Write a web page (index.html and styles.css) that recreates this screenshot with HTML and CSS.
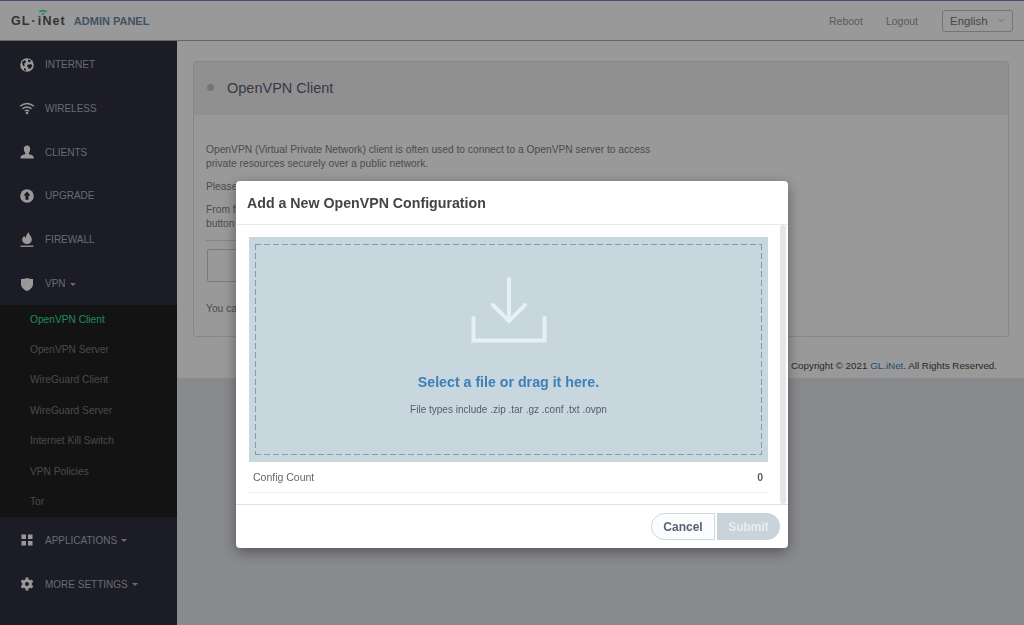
FILE: index.html
```html
<!DOCTYPE html>
<html lang="en">
<head>
    <meta charset="UTF-8">
    <meta name="viewport" content="width=device-width, initial-scale=1.0">
    <title>GL.iNet Admin Panel</title>
    <link rel="stylesheet" href="styles.css">
</head>
<body>

<div class="topbar">
    <div class="logo">
        <svg class="logo-wifi" width="10" height="7" viewBox="0 0 10 7"><path d="M0.5 2.2Q5 -0.6 9.5 2.2L8.2 3.6Q5 1.8 1.8 3.6Z" fill="#4fe0a8"/><path d="M3 4.6Q5 3.4 7 4.6L5 6.6Z" fill="#4fe0a8"/></svg>
        GL<span class="logo-dot">·</span>iNet
    </div>
    <div class="panel-name">ADMIN PANEL</div>
    <div class="top-links">
        <a>Reboot</a>
        <a>Logout</a>
        <div class="lang">English
            <svg width="7" height="5" viewBox="0 0 7 5"><path d="M1 1l2.5 2.5L6 1" fill="none" stroke="#bbb" stroke-width="1"/></svg>
        </div>
    </div>
</div>

<div class="layout">
    <div class="sidebar">
        <div class="menu-item">
            <svg class="menu-icon" viewBox="0 0 16 16"><circle cx="8" cy="8" r="6.8" fill="#fff"/><path d="M3 5l3-2 1 2-2 2 1 2-2 0zM9 2.5l3 1-1 2-2-1zM8 8l4-1 1.5 2-2.5 3-2-1zM5 11l2 1 0 2-2-1z" fill="#2d2f3f"/></svg>
            INTERNET
        </div>
        <div class="menu-item">
            <svg class="menu-icon" viewBox="0 0 16 16"><path d="M1 6.2Q8 0.8 15 6.2M3.4 8.8Q8 5.2 12.6 8.8M5.8 11Q8 9.6 10.2 11" fill="none" stroke="#fff" stroke-width="1.4"/><circle cx="8" cy="13" r="1.3" fill="#fff"/></svg>
            WIRELESS
        </div>
        <div class="menu-item">
            <svg class="menu-icon" viewBox="0 0 16 16"><path d="M8 1.5c2 0 3.2 1.5 3.2 3.5S10 9 9.6 9.4c0 1 3.9 1.4 5 3V14.5H1.600V12.400c1.100-1.600 5-2 5-3C6.200 9 4.800 7 4.800 5S6 1.500 8 1.500z" fill="#fff"/></svg>
            CLIENTS
        </div>
        <div class="menu-item">
            <svg class="menu-icon" viewBox="0 0 16 16"><circle cx="8" cy="8" r="6.800" fill="#fff"/><path d="M8 3.600L11.600 7.600H9.600V11.800H6.400V7.600H4.400z" fill="#2d2f3f"/></svg>
            UPGRADE
        </div>
        <div class="menu-item">
            <svg class="menu-icon" viewBox="0 0 16 16"><path d="M9.500 0c.4 3 3.300 4.200 3.300 7.600 0 2.600-2 4.500-4.800 4.500s-4.800-2-4.800-4.300c0-2 1.200-3 2-4 .3 1.100.8 1.700 1.500 2C7 3.500 8.300 1.700 9.500 0z" fill="#fff"/><path d="M1.500 14.200H14.500" stroke="#fff" stroke-width="1.300"/></svg>
            FIREWALL
        </div>
        <div class="menu-item">
            <svg class="menu-icon" viewBox="0 0 16 16"><path d="M2 3Q5 3.200 8 2Q11 3.200 14 3V8C14 11.500 11 13.800 8 15C5 13.800 2 11.500 2 8z" fill="#fff"/></svg>
            VPN <span class="caret"></span>
        </div>
        <div class="submenu">
            <div class="sub-item active">OpenVPN Client</div>
            <div class="sub-item">OpenVPN Server</div>
            <div class="sub-item">WireGuard Client</div>
            <div class="sub-item">WireGuard Server</div>
            <div class="sub-item">Internet Kill Switch</div>
            <div class="sub-item">VPN Policies</div>
            <div class="sub-item">Tor</div>
        </div>
        <div class="menu-item">
            <svg class="menu-icon" viewBox="0 0 16 16"><path d="M2.500 2.500H7V7H2.500zM9 2.500H13.500V7H9zM2.500 9H7V13.500H2.500zM9 9H13.500V13.500H9z" fill="#fff"/></svg>
            APPLICATIONS <span class="caret"></span>
        </div>
        <div class="menu-item">
            <svg class="menu-icon" viewBox="0 0 16 16"><path d="M8 1.500V14.500M2.400 4.800L13.600 11.200M13.600 4.800L2.400 11.200" stroke="#fff" stroke-width="2.800"/><circle cx="8" cy="8" r="4.800" fill="#fff"/><circle cx="8" cy="8" r="2" fill="#2d2f3f"/></svg>
            MORE SETTINGS <span class="caret"></span>
        </div>
    </div>

    <div class="main">
        <div class="content">
            <div class="panel">
                <div class="panel-head">
                    <span class="panel-dot"></span>
                    <h1>OpenVPN Client</h1>
                </div>
                <div class="panel-body">
                    <p>OpenVPN (Virtual Private Network) client is often used to connect to a OpenVPN server to access<br>private resources securely over a public network.</p>
                    <p>Please</p>
                    <p>From f<br>button</p>
                    <div class="panel-rule"></div>
                    <div class="config-box"></div>
                    <p>You ca</p>
                </div>
            </div>
            <div class="copyright">Copyright © 2021 <a>GL.iNet</a>. All Rights Reserved.</div>
        </div>
    </div>
</div>

<div class="backdrop">
    <div class="modal">
        <div class="modal-head">Add a New OpenVPN Configuration</div>
        <div class="modal-body">
            <div class="modal-scroll">
                <div class="dropzone">
                    <div class="dropzone-inner">
                        <svg class="drop-icon" width="76" height="66" viewBox="0 0 76 66"><path d="M38 2V43M22 28L38 44L54 28M2.500 41V63.500H73.500V41" fill="none" stroke="#e6f1f3" stroke-width="4" stroke-linecap="round"/></svg>
                        <div class="drop-title">Select a file or drag it here.</div>
                        <div class="drop-types">File types include .zip .tar .gz .conf .txt .ovpn</div>
                    </div>
                </div>
                <div class="config-row">
                    <span>Config Count</span>
                    <b>0</b>
                </div>
            </div>
            <div class="scrollbar"></div>
        </div>
        <div class="modal-foot">
            <button class="btn-cancel">Cancel</button>
            <button class="btn-submit">Submit</button>
        </div>
    </div>
</div>

</body>
</html>
```

FILE: styles.css
```css
html, body {
    height: 100%;
}
body {
    margin: 0;
    background: #e4e6ed;
    font-family: "Liberation Sans", Arial, sans-serif;
    overflow: hidden;
}
.topbar {
    height: 39px;
    display: flex;
    align-items: center;
    background: #fff;
    border-top: 1px solid #847cc8;
    border-bottom: 1px solid #a8a8a8;
    padding-left: 11px;
}
.logo {
    position: relative;
    font-size: 12.5px;
    font-weight: bold;
    letter-spacing: 1.1px;
    color: #555;
    margin-right: 8px;
}
.logo-dot {
    margin: 0 1px;
}
.logo-wifi {
    position: absolute;
    left: 27px;
    top: -5px;
}
.panel-name {
    font-size: 11px;
    font-weight: bold;
    color: #6c8aa6;
}
.top-links {
    margin-left: auto;
    display: flex;
    align-items: center;
    font-size: 10.500px;
    color: #999;
}
.top-links a {
    margin-right: 23px;
}
.lang {
    width: 71px;
    height: 22px;
    box-sizing: border-box;
    margin-right: 11px;
    margin-left: 1px;
    border: 1px solid #c4c4c4;
    border-radius: 3px;
    padding: 0 7px;
    font-size: 11.500px;
    color: #777;
    display: flex;
    align-items: center;
    justify-content: space-between;
}
.layout {
    display: flex;
    height: 585px;
}
.sidebar {
    width: 177px;
    flex-shrink: 0;
    padding-top: 1.700px;
    background: #2d2f3f;
}
.menu-item {
    height: 43.800px;
    display: flex;
    align-items: center;
    padding-left: 19px;
    font-size: 10px;
    color: #b0b1bc;
    box-sizing: border-box;
}
.menu-icon {
    width: 16px;
    height: 16px;
    margin-right: 10px;
}
.caret {
    width: 0;
    height: 0;
    margin-left: 4px;
    margin-top: 1px;
    border-left: 3px solid transparent;
    border-right: 3px solid transparent;
    border-top: 3px solid #b0b1bc;
}
.submenu {
    background: #202020;
    margin: -0.800px 0 1.100px;
}
.sub-item {
    height: 30.400px;
    line-height: 30.400px;
    padding-left: 30px;
    font-size: 10.200px;
    color: #7c7c7c;
}
.sub-item.active {
    color: #34e09c;
}
.main {
    flex: 1;
}
.content {
    height: 317px;
    padding: 20px 15px 0 16px;
    background: #fff;
}
.panel {
    height: 274px;
    border: 1px solid #e2e2e2;
    border-radius: 3px;
}
.panel-head {
    height: 53px;
    display: flex;
    align-items: center;
    padding: 0 0 2px 13px;
    box-sizing: border-box;
    background: #f0f0f0;
}
.panel-dot {
    width: 7px;
    height: 7px;
    border-radius: 50%;
    background: #c4c4c4;
    margin-right: 13px;
}
.panel-head h1 {
    margin: 0;
    font-size: 14.500px;
    font-weight: normal;
    color: #5c6076;
}
.panel-body {
    padding: 28px 12px 0;
    font-size: 10.250px;
    line-height: 14px;
    color: #808080;
}
.panel-body p {
    margin: 0 0 9px;
}
.panel-rule {
    width: 440px;
    height: 1px;
    margin-top: 8px;
    background: #dcdcdc;
}
.config-box {
    width: 440px;
    height: 31px;
    margin: 8px 0 20px 1px;
    border: 1px solid #ccc;
    border-radius: 2px;
}
.copyright {
    margin-top: 23px;
    padding-right: 12px;
    text-align: right;
    font-size: 9.800px;
    color: #444;
}
.copyright a {
    color: #3d7fb8;
}
.backdrop {
    position: fixed;
    top: 0;
    left: 0;
    width: 100%;
    height: 100%;
    background: rgba(0, 0, 0, 0.4);
}
.modal {
    width: 552px;
    margin: 181px auto 0;
    background: #fff;
    border-radius: 4px;
    box-shadow: 0 4px 14px rgba(0, 0, 0, 0.4);
}
.modal-head {
    height: 43px;
    display: flex;
    align-items: center;
    padding-left: 11px;
    border-bottom: 1px solid #e8e8e8;
    font-size: 14.200px;
    font-weight: bold;
    color: #444;
}
.modal-body {
    height: 279px;
    display: flex;
    border-bottom: 1px solid #e0e0e0;
    overflow: hidden;
}
.modal-scroll {
    width: 519px;
    margin: 12px 13px 0;
}
.scrollbar {
    width: 6px;
    margin-left: -1px;
    background: #e6e6e6;
    border-radius: 3px;
}
.dropzone {
    height: 225px;
    box-sizing: border-box;
    padding: 7px 6px;
    background: #c8d7de;
}
/* dashes are longer than a plain dashed border gives */
.dropzone-inner {
    height: 100%;
    box-sizing: border-box;
    padding-top: 33px;
    display: flex;
    flex-direction: column;
    align-items: center;
    background:
        linear-gradient(to right, #7d9fa9 70%, transparent 0) top left / 9px 1px repeat-x,
        linear-gradient(to right, #7d9fa9 70%, transparent 0) bottom left / 9px 1px repeat-x,
        linear-gradient(to bottom, #7d9fa9 70%, transparent 0) top left / 1px 9px repeat-y,
        linear-gradient(to bottom, #7d9fa9 70%, transparent 0) top right / 1px 9px repeat-y;
}
.drop-icon {
    display: block;
}
.drop-title {
    margin-top: 31px;
    font-size: 14.200px;
    font-weight: bold;
    color: #3d7fb8;
}
.drop-types {
    margin-top: 14px;
    font-size: 10px;
    color: #555c6c;
}
.config-row {
    height: 30px;
    display: flex;
    align-items: center;
    justify-content: space-between;
    padding: 0 5px 0 4px;
    border-bottom: 1px solid #eee;
    font-size: 10.500px;
    color: #666;
}
.config-row b {
    color: #555c6c;
}
.modal-foot {
    height: 43px;
    display: flex;
    justify-content: flex-end;
    align-items: center;
    padding-right: 8px;
    gap: 2px;
}
.modal-foot button {
    height: 27px;
    font-family: inherit;
    font-size: 12px;
    font-weight: bold;
    padding: 0;
}
.btn-cancel {
    width: 64px;
    background: #fbfcfd;
    border: 1px solid #cfd6dc;
    border-radius: 14px 0 0 14px;
    color: #5c6076;
}
.btn-submit {
    width: 63px;
    background: #c9d3da;
    border: none;
    border-radius: 0 14px 14px 0;
    color: #e8eef0;
}
```
